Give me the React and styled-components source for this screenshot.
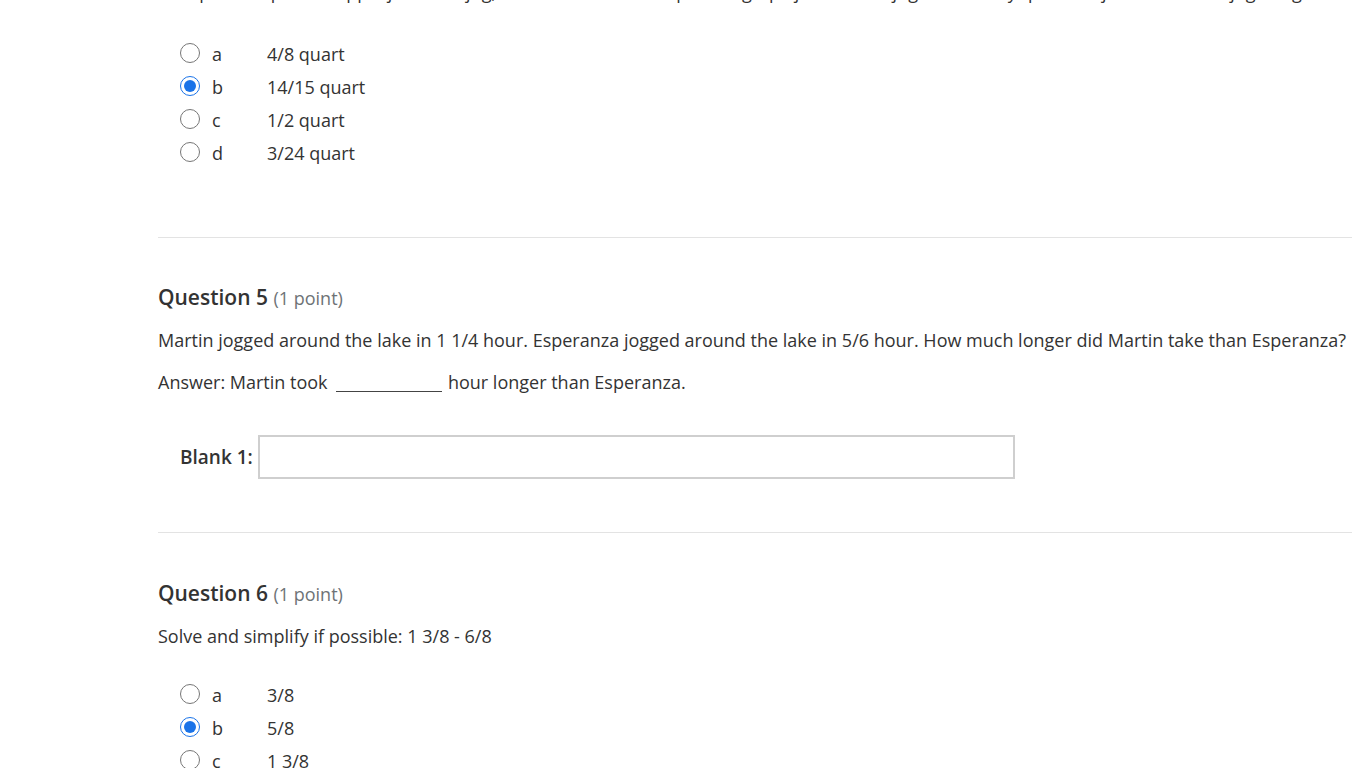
import React from 'react'
import styled, { createGlobalStyle } from 'styled-components'

const GlobalStyle = createGlobalStyle`
  html, body {
    margin: 0;
    padding: 0;
    background: #fff;
    overflow: hidden;
  }
  body {
    font-family: "Open Sans", "Liberation Sans", sans-serif;
    color: #333;
  }
`

const questions = [
  {
    id: 5,
    top: 44,
    text: 'Martin jogged around the lake in 1 1/4 hour. Esperanza jogged around the lake in 5/6 hour. How much longer did Martin take than Esperanza?',
    blank: true,
  },
  {
    id: 6,
    top: 45,
    text: 'Solve and simplify if possible: 1 3/8 - 6/8',
    options: [
      { key: 'a', label: '3/8' },
      { key: 'b', label: '5/8', checked: true },
      { key: 'c', label: '1 3/8' },
      { key: 'd', label: '7/8' },
    ],
  },
]

const prevOptions = [
  { key: 'a', label: '4/8 quart' },
  { key: 'b', label: '14/15 quart', checked: true },
  { key: 'c', label: '1/2 quart' },
  { key: 'd', label: '3/24 quart' },
]

const Options = ({ name, items, top }) => (
  <OptionList $top={top}>
    {items.map(o => (
      <OptionRow key={o.key}>
        <Radio type="radio" name={name} defaultChecked={!!o.checked} />
        <Letter>{o.key}</Letter>
        <Answer>{o.label}</Answer>
      </OptionRow>
    ))}
  </OptionList>
)

const App = () => {
  return (
    <Page>
      <GlobalStyle />
      <Section $bottom={68}>
        <CutText>
          Sam put 2/3 quart of apple juice in a jug, then he added 4/15 quart of grape juice to the jug. How many quarts of juice are in the jug altogether?
        </CutText>
        <Options name="q4" items={prevOptions} top={31} />
      </Section>
      <Divider />
      {questions.map(q => (
        <React.Fragment key={q.id}>
          <Section $top={q.top} $bottom={q.blank ? 53 : 0}>
            <Heading>
              Question {q.id} <Points>(1 point)</Points>
            </Heading>
            <Text>{q.text}</Text>
            {q.blank && (
              <>
                <Text>
                  Answer: Martin took <Gap /> hour longer than Esperanza.
                </Text>
                <BlankRow>
                  <BlankLabel>Blank 1:</BlankLabel>
                  <BlankInput type="text" />
                </BlankRow>
              </>
            )}
            {q.options && <Options name={`q${q.id}`} items={q.options} top={28} />}
          </Section>
          {q.blank && <Divider />}
        </React.Fragment>
      ))}
    </Page>
  )
}

export default App

const Page = styled.div`
  padding: 0 14px 0 158px;
`
const Section = styled.div`
  padding-top: ${p => p.$top || 0}px;
  padding-bottom: ${p => p.$bottom || 0}px;
`
const CutText = styled.p`
  margin: -21px 0 0;
  font-size: 18px;
  line-height: 27px;
  white-space: nowrap;
  overflow: hidden;
`
const Divider = styled.hr`
  margin: 0;
  border: none;
  border-top: 1px solid #e3e3e3;
`
const Heading = styled.h2`
  margin: 0;
  font-size: 21px;
  font-weight: 600;
  line-height: 30px;
  color: #333;
`
const Points = styled.span`
  font-size: 18px;
  font-weight: 400;
  color: #6e7376;
`
const Text = styled.p`
  margin: 14px 0 0;
  font-size: 18px;
  line-height: 27px;

  & + & {
    margin-top: 15px;
  }
`
const Gap = styled.span`
  display: inline-block;
  width: 106px;
  margin: 0 1px 0 4px;
  border-bottom: 1px solid #444;
  vertical-align: -3px;
`
const BlankRow = styled.div`
  display: flex;
  align-items: center;
  gap: 5px;
  margin-top: 39px;
  padding-left: 22px;
`
const BlankLabel = styled.label`
  font-size: 19px;
  font-weight: 600;
`
const BlankInput = styled.input`
  box-sizing: border-box;
  width: 757px;
  height: 44px;
  border: 2px solid #cfcfcf;
  border-radius: 0;
  background: #fff;
  outline: none;
`
const OptionList = styled.div`
  display: flex;
  flex-direction: column;
  margin-top: ${p => p.$top}px;
  padding-left: 22px;
`
const OptionRow = styled.label`
  display: flex;
  align-items: center;
  height: 33px;
  font-size: 18px;
`
const Radio = styled.input`
  width: 20px;
  height: 20px;
  margin: 0 12px 0 0;
  position: relative;
  top: -1px;
  accent-color: #1a73e8;
`
const Letter = styled.span`
  width: 55px;
`
const Answer = styled.span``
